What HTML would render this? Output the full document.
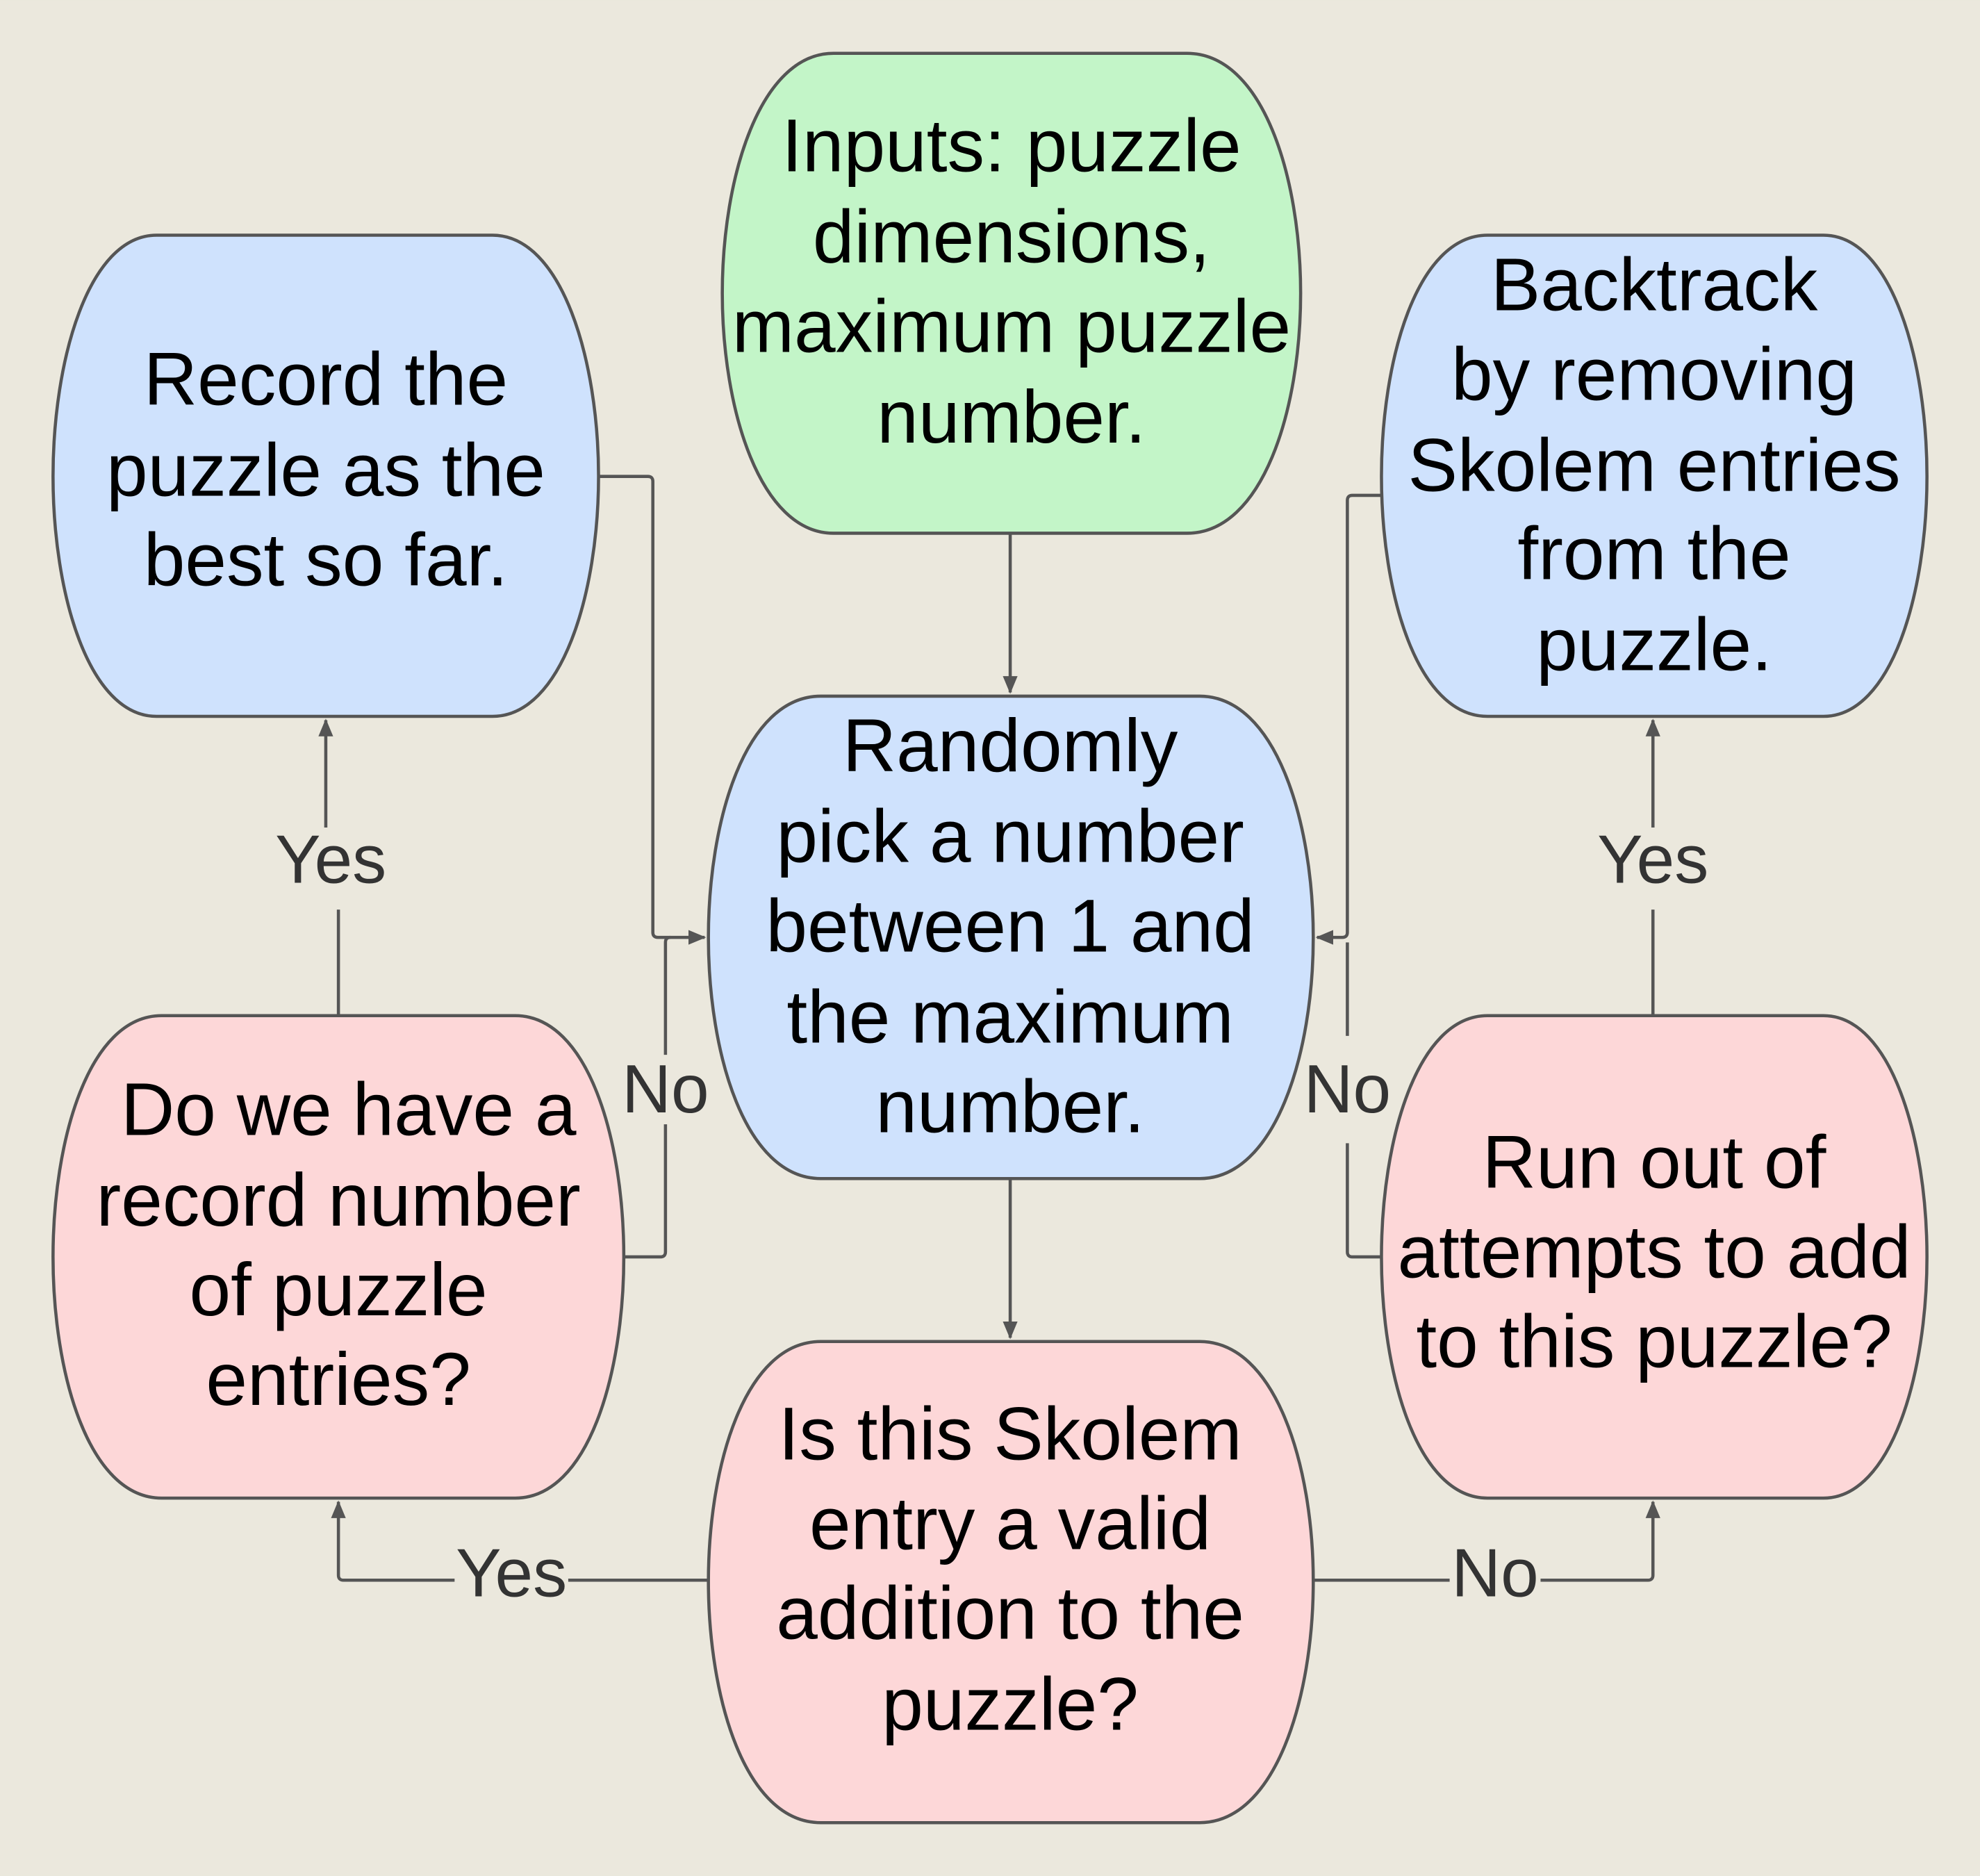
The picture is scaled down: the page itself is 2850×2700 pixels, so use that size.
<!DOCTYPE html>
<html><head><meta charset="utf-8"><style>
html,body{margin:0;padding:0;background:#ebe8dd;}
svg{display:block;}
text{font-family:"Liberation Sans",sans-serif;}
</style></head><body>
<svg width="2850" height="2700" viewBox="0 0 1568 1485" xmlns="http://www.w3.org/2000/svg">
<defs>
<marker id="b" viewBox="0 0 12 12" refX="11" refY="6" markerWidth="14" markerHeight="14" orient="auto" markerUnits="userSpaceOnUse"><path d="M0,1 L12,6 L0,11 z" fill="#555"/></marker>
</defs>
<rect width="1568" height="1485" fill="#ebe8dd"/>
<g stroke="#555" stroke-width="2.5">
<path d="M660,42 H940 C1000,42 1030,140 1030,232 C1030,324 1000,422 940,422 H660 C602,422 572,324 572,232 C572,140 602,42 660,42Z" fill="#c3f5c8"/>
<path d="M124,186 H390 C445,186 474,285 474,377 C474,469 445,567 390,567 H124 C70,567 42,469 42,377 C42,285 70,186 124,186Z" fill="#cfe2fd"/>
<path d="M1178,186 H1444 C1498,186 1526,285 1526,377 C1526,469 1498,567 1444,567 H1178 C1122,567 1094,469 1094,377 C1094,285 1122,186 1178,186Z" fill="#cfe2fd"/>
<path d="M650,551 H950 C1010,551 1040,650 1040,742 C1040,834 1010,933 950,933 H650 C590,933 561,834 561,742 C561,650 590,551 650,551Z" fill="#cfe2fd"/>
<path d="M128,804 H408 C466,804 494,903 494,995 C494,1087 466,1186 408,1186 H128 C70,1186 42,1087 42,995 C42,903 70,804 128,804Z" fill="#fdd7d8"/>
<path d="M1178,804 H1444 C1498,804 1526,903 1526,995 C1526,1087 1498,1186 1444,1186 H1178 C1122,1186 1094,1087 1094,995 C1094,903 1122,804 1178,804Z" fill="#fdd7d8"/>
<path d="M650,1062 H950 C1010,1062 1040,1160 1040,1252 C1040,1344 1010,1443 950,1443 H650 C590,1443 561,1344 561,1252 C561,1160 590,1062 650,1062Z" fill="#fdd7d8"/>
</g>
<g stroke="#555" stroke-width="2.5" fill="none">
<path d="M800,422 V548" marker-end="url(#b)"/>
<path d="M800,933 V1059" marker-end="url(#b)"/>
<path d="M474,377 H513 Q517,377 517,381 V738 Q517,742 521,742 H558" marker-end="url(#b)"/>
<path d="M494,995 H523 Q527,995 527,991 V890"/>
<path d="M527,835 V746 Q527,742 531,742"/>
<path d="M268,804 V720"/>
<path d="M258,655 V570" marker-end="url(#b)"/>
<path d="M561,1251 H450"/>
<path d="M360,1251 H272 Q268,1251 268,1247 V1189" marker-end="url(#b)"/>
<path d="M1040,1251 H1148"/>
<path d="M1220,1251 H1305 Q1309,1251 1309,1247 V1189" marker-end="url(#b)"/>
<path d="M1309,804 V720"/>
<path d="M1309,655 V570" marker-end="url(#b)"/>
<path d="M1094,392 H1071 Q1067,392 1067,396 V738 Q1067,742 1063,742 H1043" marker-end="url(#b)"/>
<path d="M1094,995 H1071 Q1067,995 1067,991 V905"/>
<path d="M1067,820 V746"/>
</g>
<g font-size="59" fill="#000" text-anchor="middle" dominant-baseline="central">
<text x="801" y="115">Inputs: puzzle</text>
<text x="801" y="187">dimensions,</text>
<text x="801" y="258">maximum puzzle</text>
<text x="801" y="330">number.</text>
<text x="258" y="300">Record the</text>
<text x="258" y="372">puzzle as the</text>
<text x="258" y="443">best so far.</text>
<text x="1310" y="225">Backtrack</text>
<text x="1310" y="296">by removing</text>
<text x="1310" y="368">Skolem entries</text>
<text x="1310" y="438">from the</text>
<text x="1310" y="510">puzzle.</text>
<text x="800" y="590">Randomly</text>
<text x="800" y="662">pick a number</text>
<text x="800" y="733">between 1 and</text>
<text x="800" y="805">the maximum</text>
<text x="800" y="876">number.</text>
<text x="276" y="878">Do we have a</text>
<text x="268" y="950">record number</text>
<text x="268" y="1021">of puzzle</text>
<text x="268" y="1092">entries?</text>
<text x="1310" y="920">Run out of</text>
<text x="1310" y="991">attempts to add</text>
<text x="1310" y="1062">to this puzzle?</text>
<text x="800" y="1135">Is this Skolem</text>
<text x="800" y="1206">entry a valid</text>
<text x="800" y="1277">addition to the</text>
<text x="800" y="1349">puzzle?</text>
</g>
<g font-size="54" fill="#333" text-anchor="middle" dominant-baseline="central">
<text x="262" y="680">Yes</text>
<text x="1309" y="680">Yes</text>
<text x="527" y="862">No</text>
<text x="1067" y="862">No</text>
<text x="405" y="1245">Yes</text>
<text x="1184" y="1245">No</text>
</g>
</svg>
</body></html>
